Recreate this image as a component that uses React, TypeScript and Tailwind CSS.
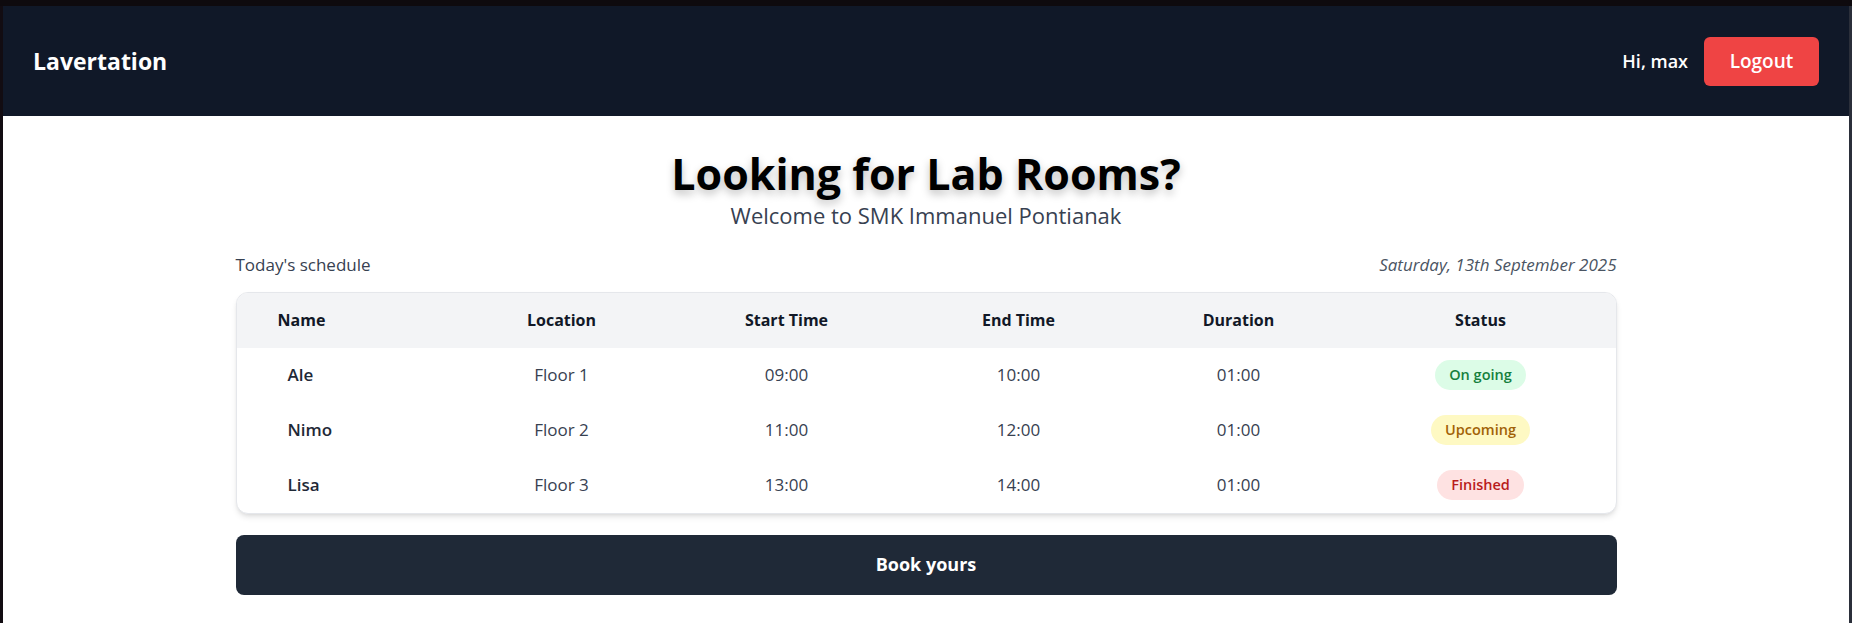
const rows = [
  { name: 'Ale', location: 'Floor 1', start: '09:00', end: '10:00', duration: '01:00', status: 'On going' },
  { name: 'Nimo', location: 'Floor 2', start: '11:00', end: '12:00', duration: '01:00', status: 'Upcoming' },
  { name: 'Lisa', location: 'Floor 3', start: '13:00', end: '14:00', duration: '01:00', status: 'Finished' },
]

const statusStyle: Record<string, string> = {
  'On going': 'bg-[#dcfce7] text-[#15803d]',
  Upcoming: 'bg-[#fef9c3] text-[#a16207]',
  Finished: 'bg-[#fee2e2] text-[#b91c1c]',
}

const cols = 'grid grid-cols-[219px_212px_238px_226px_214px_1fr] items-center'

const App = () => {
  return (
    <div className="min-h-[623px] bg-[#0e0a0e] pt-[6px] font-['Open_Sans',sans-serif]">
      <div className="flex min-h-[617px] border-l-[3px] border-r-[3px] border-l-[#120c12] border-r-[#2b2f3a] bg-white flex-col">
        {/* navbar */}
        <nav className="h-[110px] bg-[#101828] flex items-center justify-between px-[30px]">
          <h1 className="text-white text-[23px] font-bold">Lavertation</h1>
          <div className="flex items-center gap-4">
            <span className="text-white text-[18px] font-semibold">Hi, max</span>
            <button className="h-[49px] w-[115px] bg-[#ef4444] rounded-md text-white text-[19px] font-semibold">Logout</button>
          </div>
        </nav>

        {/* hero */}
        <main className="flex flex-col items-center pt-[32px]">
          <h2 className="text-[43px] leading-[52px] font-bold text-black [text-shadow:0_4px_8px_rgba(0,0,0,0.25)]">Looking for Lab Rooms?</h2>
          <p className="mt-[2px] text-[22px] leading-[26px] font-medium text-[#374151]">Welcome to SMK Immanuel Pontianak</p>

          <div className="w-[1381px] mt-[24px]">
            <div className="flex items-center justify-between text-[17px] text-[#374151] mb-[14px]">
              <span className="font-medium">Today's schedule</span>
              <span className="italic text-[#4b5563]">Saturday, 13th September 2025</span>
            </div>

            {/* table */}
            <div className="rounded-xl border border-gray-200 shadow-md overflow-hidden bg-white">
              <div className={`${cols} h-[55px] bg-[#f3f4f6] text-[16px] font-bold text-[#111827]`}>
                <span className="pl-[41px]">Name</span>
                <span className="text-center">Location</span>
                <span className="text-center">Start Time</span>
                <span className="text-center">End Time</span>
                <span className="text-center">Duration</span>
                <span className="text-center">Status</span>
              </div>
              {rows.map((r, i) => (
                <div key={i} className={`${cols} h-[55px] text-[17px] text-[#374151]`}>
                  <span className="pl-[51px] font-semibold text-[#1f2937]">{r.name}</span>
                  <span className="text-center">{r.location}</span>
                  <span className="text-center">{r.start}</span>
                  <span className="text-center">{r.end}</span>
                  <span className="text-center">{r.duration}</span>
                  <div className="flex justify-center">
                    <span className={`rounded-full px-[14px] h-[30px] flex items-center text-[14.5px] font-semibold ${statusStyle[r.status]}`}>{r.status}</span>
                  </div>
                </div>
              ))}
            </div>

            <button className="mt-[21px] w-full h-[60px] rounded-lg bg-[#1f2937] text-white text-[18px] font-bold">Book yours</button>
          </div>
        </main>
      </div>
    </div>
  )
}

export default App
